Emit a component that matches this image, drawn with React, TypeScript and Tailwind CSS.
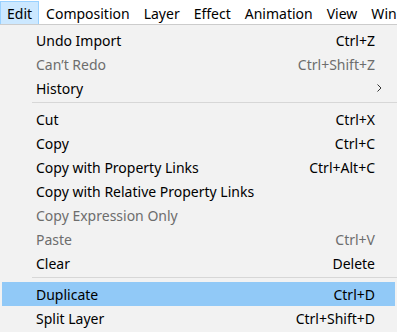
import React from "react";

type Item =
  | { sep: true }
  | { label: string; shortcut?: string; disabled?: boolean; sub?: boolean; active?: boolean };

const items: Item[] = [
  { label: "Undo Import", shortcut: "Ctrl+Z" },
  { label: "Can\u2019t Redo", shortcut: "Ctrl+Shift+Z", disabled: true },
  { label: "History", sub: true },
  { sep: true },
  { label: "Cut", shortcut: "Ctrl+X" },
  { label: "Copy", shortcut: "Ctrl+C" },
  { label: "Copy with Property Links", shortcut: "Ctrl+Alt+C" },
  { label: "Copy with Relative Property Links" },
  { label: "Copy Expression Only", disabled: true },
  { label: "Paste", shortcut: "Ctrl+V", disabled: true },
  { label: "Clear", shortcut: "Delete" },
  { sep: true },
  { label: "Duplicate", shortcut: "Ctrl+D", active: true },
  { label: "Split Layer", shortcut: "Ctrl+Shift+D" },
];

const menus = ["Composition", "Layer", "Effect", "Animation", "View", "Window"];

export default function App() {
  return (
    <div
      className="w-[397px] h-[332px] overflow-hidden bg-[#f2f2f2] text-[14px] text-black"
      style={{ fontFamily: '"Noto Sans", "Open Sans", sans-serif' }}
    >
      <div className="flex h-[25px] items-stretch bg-white border-b border-[#cccccc] whitespace-nowrap overflow-hidden">
        <div className="mt-px mb-[-1px] flex items-center pt-[2px] px-[6px] bg-[#cce8ff] border border-[#99d1ff] leading-none">
          Edit
        </div>
        {menus.map((m) => (
          <div key={m} className="flex items-center pt-[3px] px-[7px] leading-none">
            {m}
          </div>
        ))}
      </div>
      <div className="pt-[3px] pl-[2px] pr-[2px]">
        {items.map((it, i) =>
          "sep" in it ? (
            <div key={i} className="h-[7px] pl-[30px] pt-[2px]">
              <div className="h-px bg-[#d7d7d7] -mr-[2px]" />
            </div>
          ) : (
            <div
              key={i}
              className={`flex h-[24px] items-center pl-[34px] pr-[20px] whitespace-nowrap ${
                it.active ? "bg-[#91c9f7]" : ""
              } ${it.disabled ? "text-[#6d6d6d]" : ""}`}
            >
              <span className="flex-1">{it.label}</span>
              {it.shortcut && <span>{it.shortcut}</span>}
              {it.sub && (
                <svg width="5" height="8" viewBox="0 0 5 8" className="-mr-[7px]">
                  <path d="M0.5 0.5 L4 4 L0.5 7.5" fill="none" stroke="#333" strokeWidth="1" />
                </svg>
              )}
            </div>
          )
        )}
      </div>
    </div>
  );
}
